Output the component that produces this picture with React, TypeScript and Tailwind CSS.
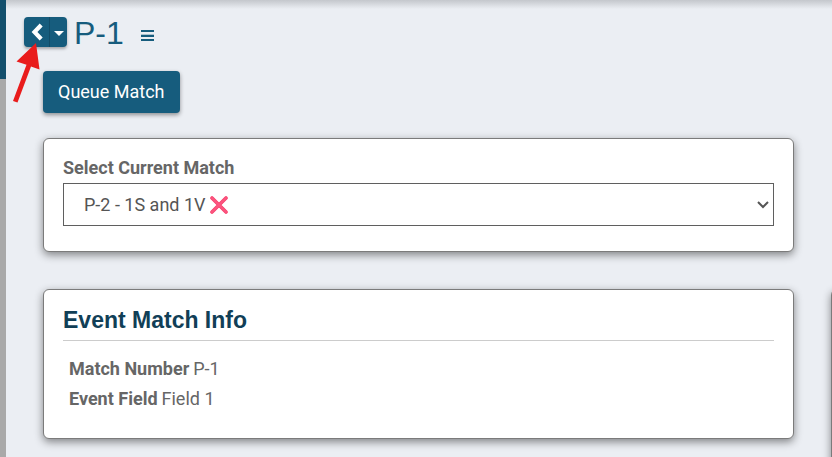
import React from "react";

const cardClass =
  "rounded-md border border-[#7b7b7b] bg-white px-[19px] shadow-[0_3px_9px_rgba(0,0,0,0.45)]";

function Header() {
  return (
    <header className="flex h-[51px] items-start pl-[18px] pt-[17px]">
      <div className="flex h-[30px] overflow-hidden rounded-[4px] bg-[#165c7d] shadow-[0_2px_3px_rgba(0,0,0,0.3)]">
        <button aria-label="Back" className="flex w-[26px] items-center justify-center border-r border-[#114c68]">
          <svg width="12" height="18" viewBox="0 0 12 18" fill="none" stroke="#fff" strokeWidth="4.2">
            <path d="M10.200 2 3.500 9 10.200 16" />
          </svg>
        </button>
        <button aria-label="More matches" className="flex w-[17px] items-center justify-center pt-[3px]">
          <svg width="10" height="5" viewBox="0 0 10 5" fill="#fff">
            <path d="M0 0h10L5 5z" />
          </svg>
        </button>
      </div>
      <h1 className="ml-[7px] font-['Liberation_Sans',Arial,sans-serif] text-[32px] leading-[32px] text-[#165c7d]">P-1</h1>
      <button aria-label="Menu" className="ml-4 mt-[13px]">
        <svg width="14" height="12" viewBox="0 0 14 12" fill="#165c7d">
          <path d="M1 0h13v2H1zM1 5h13v2H1zM1 9h13v2H1z" />
          <path d="M1 4h13v1H1z" opacity="0.3" />
        </svg>
      </button>
    </header>
  );
}

function MatchSelect() {
  return (
    <section className={`${cardClass} pb-[25px] pt-[17px]`}>
      <label htmlFor="match" className="block text-[18px] font-bold leading-[24px] text-[#666]">
        Select Current Match
      </label>
      <div className="relative mt-[3px]">
        <select
          id="match"
          className="block h-[43px] w-full appearance-none border border-[#5f5f5f] bg-white pl-5 pr-8 text-[18px] text-[#555]"
        >
          <option>P-2 - 1S and 1V</option>
        </select>
        <svg className="pointer-events-none absolute left-[147px] top-[13px]" width="18" height="18" viewBox="0 0 18 18" fill="none" strokeLinecap="round">
          <path d="M2 2 16 16M16 2 2 16" stroke="#f8406c" strokeWidth="3.6" />
          <path d="M2 2 16 16M16 2 2 16" stroke="#fc5580" strokeWidth="2" />
        </svg>
        <svg className="pointer-events-none absolute right-[5px] top-[18px]" width="12" height="8" viewBox="0 0 12 8" fill="none" stroke="#555" strokeWidth="2">
          <path d="M1 1 6 6 11 1" />
        </svg>
      </div>
    </section>
  );
}

function MatchInfo() {
  return (
    <section className={`${cardClass} pb-[24px] pt-[15px]`}>
      <h2 className="border-b border-[#ccc] pb-[5px] font-['Liberation_Sans',Arial,sans-serif] text-[23px] font-bold leading-[30px] text-[#113f57]">
        Event Match Info
      </h2>
      <dl className="mt-[13px] pl-[6px] text-[18px] leading-[30px] text-[#666]">
        <div className="flex gap-1">
          <dt className="font-bold">Match Number</dt>
          <dd>P-1</dd>
        </div>
        <div className="flex gap-1">
          <dt className="font-bold">Event Field</dt>
          <dd>Field 1</dd>
        </div>
      </dl>
    </section>
  );
}

export default function App() {
  return (
    <div className="flex min-h-screen overflow-hidden bg-[#ebeef3] font-['Roboto',Arial,sans-serif]">
      <aside className="flex w-[6px] shrink-0 flex-col bg-[#a9a9a9]">
        <div className="h-[79px] bg-[#134f6c]" />
      </aside>
      <main className="relative min-w-0 flex-1 bg-[linear-gradient(#c4c7cc,#ebeef3_9px)]">
        <Header />
        <div className="pl-[37px] pt-5">
          <button className="h-[42px] rounded-[4px] bg-[#165c7d] px-[15px] pb-[2px] text-[18px] text-white shadow-[0_2px_4px_rgba(0,0,0,0.4)]">
            Queue Match
          </button>
        </div>
        <div className="flex items-end pl-[37px] pt-[25px]">
          <div className="flex min-w-0 flex-1 flex-col gap-[37px]">
            <MatchSelect />
            <MatchInfo />
          </div>
          <div className="ml-[37px] -mr-[359px] h-[150px] w-[360px] shrink-0 self-end">
            <section className={`${cardClass} h-[240px]`} />
          </div>
        </div>
        <svg className="pointer-events-none absolute left-[6px] top-[42px]" width="28" height="62" viewBox="0 0 28 62" fill="#e91c1c">
          <path d="M24 1 27.500 27.500 19 24.500 5.500 60.500 1 59 14.500 22.800 4.500 19.500z" />
        </svg>
      </main>
    </div>
  );
}
